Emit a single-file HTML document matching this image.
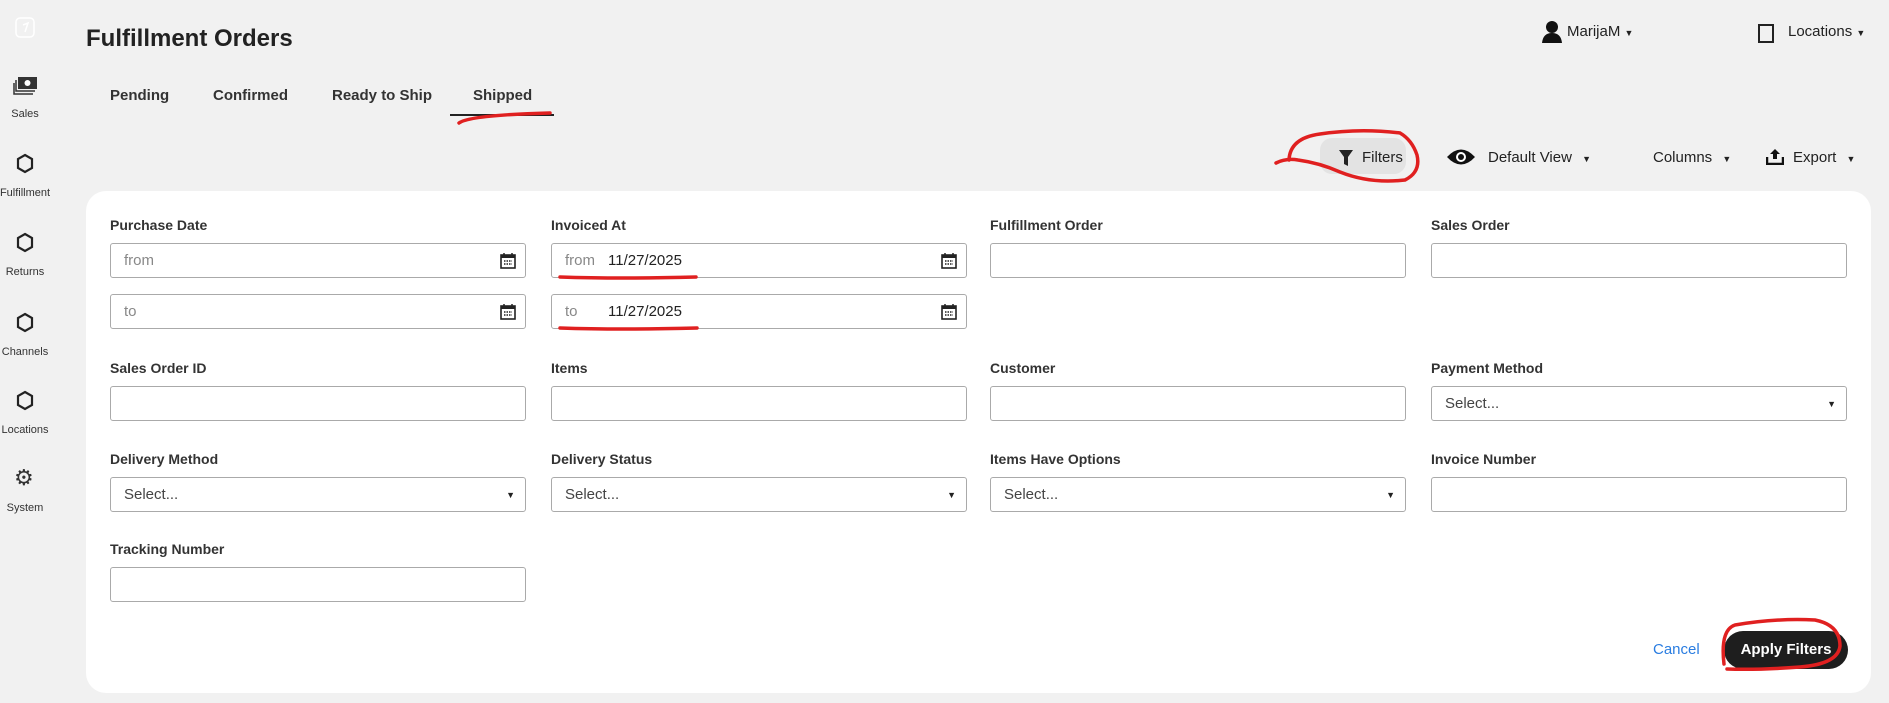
<!DOCTYPE html>
<html><head><meta charset="utf-8"><style>
*{box-sizing:border-box;margin:0;padding:0}
body{width:1889px;height:703px;background:#f1f1f1;font-family:"Liberation Sans",sans-serif;color:#222;position:relative;overflow:hidden}
.a{position:absolute}
.sb{position:absolute;left:0;width:50px;text-align:center;font-size:11px;color:#333}
.lbl{position:absolute;font-size:14px;font-weight:bold;color:#333}
.inp{position:absolute;width:416px;height:35px;border:1px solid #aaa;border-radius:3px;background:#fff;font-size:15px;color:#888;padding-left:13px;line-height:33px}
.inp .v{color:#222;position:absolute;left:56px}
.cal{position:absolute;right:9px;top:8px}
.car{position:absolute;right:10px;top:12px;font-size:9px;color:#222;line-height:10px}
.tab{position:absolute;top:87px;font-size:15px;font-weight:bold;color:#333}
.tb{position:absolute;top:149px;font-size:15px;color:#222}
</style></head><body>
<svg class="a" style="left:15px;top:17px" width="20" height="22"><rect x="1" y="1" width="18" height="19" rx="4" fill="none" stroke="#fff" stroke-width="1.5"/><path d="M8 8 L13 6 L10 15" stroke="#fff" fill="none" stroke-width="1.5"/></svg>
<svg class="a" style="left:13px;top:76px" width="26" height="20"><rect x="5" y="1" width="19" height="12" fill="#333"/><circle cx="14.5" cy="7" r="3" fill="#fff"/><path d="M3 4v11h19M1 7v11h19" stroke="#333" fill="none" stroke-width="1.5"/></svg>
<div class="sb" style="top:108px">Sales</div>
<svg class="a" style="left:16px;top:153px" width="18" height="21"><path d="M9 2 L16 6 V15 L9 19 L2 15 V6Z" fill="none" stroke="#222" stroke-width="2.2"/></svg>
<div class="sb" style="top:187px;left:-5px;width:60px">Fulfillment</div>
<svg class="a" style="left:16px;top:232px" width="18" height="21"><path d="M9 2 L16 6 V15 L9 19 L2 15 V6Z" fill="none" stroke="#222" stroke-width="2.2"/></svg>
<div class="sb" style="top:266px">Returns</div>
<svg class="a" style="left:16px;top:312px" width="18" height="21"><path d="M9 2 L16 6 V15 L9 19 L2 15 V6Z" fill="none" stroke="#222" stroke-width="2.2"/></svg>
<div class="sb" style="top:346px">Channels</div>
<svg class="a" style="left:16px;top:390px" width="18" height="21"><path d="M9 2 L16 6 V15 L9 19 L2 15 V6Z" fill="none" stroke="#222" stroke-width="2.2"/></svg>
<div class="sb" style="top:424px">Locations</div>
<div class="a" style="left:14px;top:465px;font-size:22px;color:#333">⚙</div>
<div class="sb" style="top:502px">System</div>

<div class="a" style="left:86px;top:25px;font-size:24px;font-weight:bold;color:#222">Fulfillment Orders</div>
<div class="tab" style="left:110px">Pending</div>
<div class="tab" style="left:213px">Confirmed</div>
<div class="tab" style="left:332px">Ready to Ship</div>
<div class="tab" style="left:473px">Shipped</div>
<div class="a" style="left:450px;top:114px;width:104px;height:2px;background:#222"></div>

<svg class="a" style="left:1541px;top:20px" width="22" height="24"><circle cx="11" cy="7" r="6" fill="#111"/><path d="M1 23 Q2 13 11 13 Q20 13 21 23Z" fill="#111"/></svg>
<div class="a" style="left:1567px;top:23px;font-size:15px">MarijaM <span style="font-size:9px">▼</span></div>
<svg class="a" style="left:1758px;top:24px" width="16" height="19"><rect x="1" y="1" width="14" height="17" fill="none" stroke="#222" stroke-width="2"/></svg>
<div class="a" style="left:1788px;top:23px;font-size:15px">Locations <span style="font-size:9px">▼</span></div>

<div class="a" style="left:1320px;top:138px;width:86px;height:36px;background:#e3e3e3;border-radius:12px"></div>
<svg class="a" style="left:1339px;top:150px" width="14" height="16"><path d="M0 0H14L9 7V16L5 14V7Z" fill="#222"/></svg>
<div class="tb" style="left:1362px">Filters</div>
<svg class="a" style="left:1446px;top:148px" width="30" height="18"><path d="M1 9 Q15 -6 29 9 Q15 24 1 9Z" fill="#111"/><circle cx="15" cy="9" r="5" fill="#fff"/><circle cx="15" cy="9" r="3" fill="#111"/></svg>
<div class="tb" style="left:1488px">Default View <span style="font-size:9px;margin-left:6px">▼</span></div>
<div class="tb" style="left:1653px">Columns <span style="font-size:9px;margin-left:6px">▼</span></div>
<svg class="a" style="left:1766px;top:148px" width="18" height="17"><path d="M9 1 L14 6 H11 V11 H7 V6 H4Z" fill="#111"/><path d="M1 9V16H17V9" stroke="#111" stroke-width="2.5" fill="none"/></svg>
<div class="tb" style="left:1793px">Export <span style="font-size:9px;margin-left:6px">▼</span></div>

<div class="a" style="left:86px;top:191px;width:1785px;height:502px;background:#fff;border-radius:20px"></div>

<div class="lbl" style="left:110px;top:217px">Purchase Date</div>
<div class="lbl" style="left:551px;top:217px">Invoiced At</div>
<div class="lbl" style="left:990px;top:217px">Fulfillment Order</div>
<div class="lbl" style="left:1431px;top:217px">Sales Order</div>
<div class="inp" style="left:110px;top:243px">from<svg class="cal" width="16" height="17"><rect x="1" y="3" width="14" height="13" fill="none" stroke="#222" stroke-width="1.6"/><rect x="1" y="3" width="14" height="3" fill="#222"/><path d="M4 1v3M12 1v3M4 9h8M4 12h8" stroke="#222" stroke-width="1.5" stroke-dasharray="1.5 1"/></svg></div>
<div class="inp" style="left:110px;top:294px">to<svg class="cal" width="16" height="17"><rect x="1" y="3" width="14" height="13" fill="none" stroke="#222" stroke-width="1.6"/><rect x="1" y="3" width="14" height="3" fill="#222"/><path d="M4 1v3M12 1v3M4 9h8M4 12h8" stroke="#222" stroke-width="1.5" stroke-dasharray="1.5 1"/></svg></div>
<div class="inp" style="left:551px;top:243px">from<span class="v">11/27/2025</span><svg class="cal" width="16" height="17"><rect x="1" y="3" width="14" height="13" fill="none" stroke="#222" stroke-width="1.6"/><rect x="1" y="3" width="14" height="3" fill="#222"/><path d="M4 1v3M12 1v3M4 9h8M4 12h8" stroke="#222" stroke-width="1.5" stroke-dasharray="1.5 1"/></svg></div>
<div class="inp" style="left:551px;top:294px">to<span class="v">11/27/2025</span><svg class="cal" width="16" height="17"><rect x="1" y="3" width="14" height="13" fill="none" stroke="#222" stroke-width="1.6"/><rect x="1" y="3" width="14" height="3" fill="#222"/><path d="M4 1v3M12 1v3M4 9h8M4 12h8" stroke="#222" stroke-width="1.5" stroke-dasharray="1.5 1"/></svg></div>
<div class="inp" style="left:990px;top:243px"></div>
<div class="inp" style="left:1431px;top:243px"></div>

<div class="lbl" style="left:110px;top:360px">Sales Order ID</div>
<div class="lbl" style="left:551px;top:360px">Items</div>
<div class="lbl" style="left:990px;top:360px">Customer</div>
<div class="lbl" style="left:1431px;top:360px">Payment Method</div>
<div class="inp" style="left:110px;top:386px"></div>
<div class="inp" style="left:551px;top:386px"></div>
<div class="inp" style="left:990px;top:386px"></div>
<div class="inp" style="left:1431px;top:386px;color:#444">Select...<span class="car">▼</span></div>

<div class="lbl" style="left:110px;top:451px">Delivery Method</div>
<div class="lbl" style="left:551px;top:451px">Delivery Status</div>
<div class="lbl" style="left:990px;top:451px">Items Have Options</div>
<div class="lbl" style="left:1431px;top:451px">Invoice Number</div>
<div class="inp" style="left:110px;top:477px;color:#444">Select...<span class="car">▼</span></div>
<div class="inp" style="left:551px;top:477px;color:#444">Select...<span class="car">▼</span></div>
<div class="inp" style="left:990px;top:477px;color:#444">Select...<span class="car">▼</span></div>
<div class="inp" style="left:1431px;top:477px"></div>

<div class="lbl" style="left:110px;top:541px">Tracking Number</div>
<div class="inp" style="left:110px;top:567px"></div>

<div class="a" style="left:1653px;top:641px;font-size:15px;color:#2a7de1">Cancel</div>
<div class="a" style="left:1724px;top:631px;width:124px;height:38px;background:#1e1e1e;border-radius:19px;color:#fff;font-size:15px;font-weight:bold;text-align:center;line-height:38px">Apply Filters</div>

<svg class="a" style="left:0;top:0" width="1889" height="703" fill="none" stroke="#e02020" stroke-width="3.5" stroke-linecap="round">
<path d="M459 123 Q470 115 550 113"/>
<path d="M560 277 Q620 279 696 277"/>
<path d="M560 328 Q620 330 697 328"/>
<path d="M1276 163 Q1286 158 1298 160 Q1320 163 1340 172 Q1370 184 1405 180 Q1421 172 1417 155 Q1412 140 1400 133 Q1360 128 1320 134 Q1290 138 1289 160"/>
<path d="M1724 664 Q1720 630 1735 625 Q1775 618 1815 620 Q1840 625 1840 646 Q1838 664 1800 667 Q1760 670 1727 669"/>
</svg>
</body></html>
